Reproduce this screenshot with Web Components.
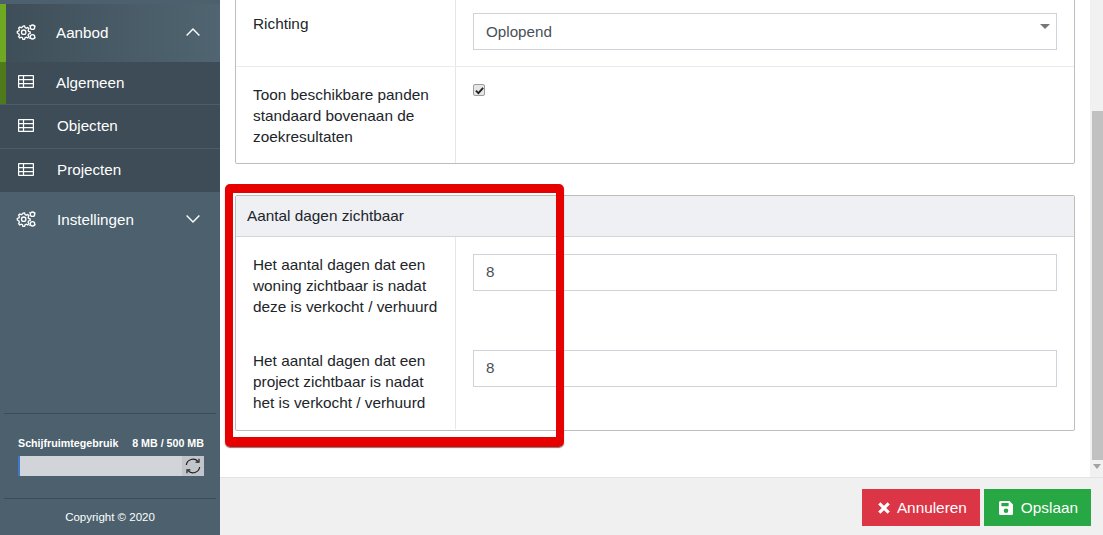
<!DOCTYPE html>
<html lang="nl">
<head>
<meta charset="utf-8">
<title>Aanbod</title>
<style>
    html, body { margin: 0; height: 100%; overflow: hidden; }
    body { font-family: "Liberation Sans", Arial, sans-serif; font-size: 15px; color: #212529; }
</style>
</head>
<body>
<app-shell>
    <side-nav slot="side">
        <nav-group icon="cogs" open active>Aanbod</nav-group>
        <nav-item current>Algemeen</nav-item>
        <nav-item>Objecten</nav-item>
        <nav-item last>Projecten</nav-item>
        <nav-group icon="cogs">Instellingen</nav-group>
    </side-nav>

    <settings-panel first>
        <form-row>
            Richting
            <form-field slot="field" select>Oplopend</form-field>
        </form-row>
        <form-row>
            Toon beschikbare panden standaard bovenaan de zoekresultaten
            <check-box slot="field"></check-box>
        </form-row>
    </settings-panel>

    <settings-panel heading="Aantal dagen zichtbaar">
        <form-row plain>
            Het aantal dagen dat een woning zichtbaar is nadat deze is verkocht / verhuurd
            <form-field slot="field">8</form-field>
        </form-row>
        <form-row plain>
            Het aantal dagen dat een project zichtbaar is nadat het is verkocht / verhuurd
            <form-field slot="field">8</form-field>
        </form-row>
    </settings-panel>

    <action-button slot="actions" kind="cancel">Annuleren</action-button>
    <action-button slot="actions" kind="save">Opslaan</action-button>
</app-shell>

<script>
const icons = {
    cogs: `<svg viewBox="0 0 20 16" width="20" height="16" fill="none" stroke="#fff" stroke-width="1.3">
        <path d="M7 3.2 8.6 3l.5 1.6 1.2.6 1.5-.7 1.1 1.2-.8 1.5.5 1.2 1.6.5v1.6l-1.6.5-.5 1.2.8 1.5-1.1 1.2-1.5-.7-1.2.5-.5 1.6H6.9l-.5-1.6-1.2-.5-1.5.7-1.1-1.2.8-1.5-.5-1.2L1.3 10V8.4l1.6-.5.5-1.2-.8-1.5 1.1-1.2 1.5.7 1.2-.6z" transform="translate(0 -1)"/>
        <circle cx="7.7" cy="8.2" r="2.2"/>
        <circle cx="16.5" cy="3.2" r="2.2"/>
        <circle cx="16.5" cy="12.8" r="2.2"/>
        <path d="M14.6 2.2 13.4 1.4M14.3 13.8l-1 .8M18.6 2.4l.8-.6M18.6 13.6l.8.6" />
    </svg>`,
    table: `<svg viewBox="0 0 16 13" width="16" height="13" fill="none" stroke="#fff" stroke-width="1.25">
        <rect x=".6" y=".6" width="14.8" height="11.8" rx=".5"/>
        <path d="M.6 4.5h14.8M.6 8.5h14.8M5.5.6v11.8"/>
    </svg>`,
    up: `<svg viewBox="0 0 14 8" width="14" height="8" fill="none" stroke="#fff" stroke-width="1.4"><path d="M.6 7.4 7 1l6.4 6.4"/></svg>`,
    down: `<svg viewBox="0 0 14 8" width="14" height="8" fill="none" stroke="#fff" stroke-width="1.4"><path d="M.6.6 7 7 13.4.6"/></svg>`,
    sync: `<svg viewBox="0 0 16 16" width="16" height="16" fill="none" stroke="#1c1f22" stroke-width="1.2">
        <path d="M1.3 7A6.8 6.8 0 0 1 13 3.4"/><path d="M14.7 9A6.8 6.8 0 0 1 3 12.6"/>
        <path d="M14 .8v3.4h-3.4" /><path d="M2 15.2v-3.4h3.4"/>
    </svg>`,
    times: `<svg viewBox="0 0 12 12" width="12" height="12" fill="#fff"><path d="M2.4 .2 6 3.8 9.6.2l2.2 2.2L8.2 6l3.6 3.6-2.2 2.2L6 8.2l-3.6 3.6L.2 9.6 3.8 6 .2 2.4z"/></svg>`,
    save: `<svg viewBox="0 0 14 14" width="14" height="14"><path fill="#fff" fill-rule="evenodd" d="M1.5 0H10.5L14 3.5V12.5A1.5 1.5 0 0 1 12.5 14H1.5A1.5 1.5 0 0 1 0 12.5V1.5A1.5 1.5 0 0 1 1.5 0zM2.4 2V5.2H9.6V2zM7 7.4a2.3 2.3 0 1 0 0 4.6 2.3 2.3 0 0 0 0-4.6z"/></svg>`
}

class AppShell extends HTMLElement {
    constructor() {
        super()
        this.attachShadow({ mode: "open" })
        this.shadowRoot.innerHTML = `
            <style>
                :host { display: flex; height: 535px; background: #fff; }
                .main { flex: 1; min-width: 0; display: flex; flex-direction: column; }
                .body { flex: 1; min-height: 0; display: flex; }
                .content { flex: 1; min-width: 0; overflow: hidden; padding: 0 15px; display: flex; flex-direction: column; gap: 31px; position: relative; }
                .bar { width: 13px; background: #f1f1f1; display: flex; flex-direction: column; padding-top: 111px; box-sizing: border-box; }
                .thumb { height: 349px; margin-left: 2px; background: #c1c1c1; }
                .arrow { margin: 4px 0 0 3px; width: 0; border: 4px solid transparent; border-top: 5px solid #a3a3a3; border-bottom: 0; }
                .foot { height: 58px; box-sizing: border-box; border-top: 1px solid #e3e3e3; background: #f0f0f0; display: flex; justify-content: flex-end; gap: 4px; padding: 11px 12px 0 0; }
                .note { position: absolute; left: 5px; top: 184px; width: 339px; height: 263px; box-sizing: border-box; border: solid #e60000; border-width: 9px 8px 10px 8px; border-radius: 5px; box-shadow: 0 1px 1px #777; pointer-events: none; }
            </style>
            <slot name="side"></slot>
            <div class="main">
                <div class="body">
                    <div class="content"><slot></slot><div class="note"></div></div>
                    <div class="bar"><div class="thumb"></div><div class="arrow"></div></div>
                </div>
                <div class="foot"><slot name="actions"></slot></div>
            </div>
        `
    }
}

class SideNav extends HTMLElement {
    constructor() {
        super()
        this.attachShadow({ mode: "open" })
        this.shadowRoot.innerHTML = `
            <style>
                :host { display: flex; flex-direction: column; width: 220px; flex: none; padding-top: 4px; box-sizing: border-box; background: #4c616d; color: #fff; }
                .rest { flex: 1; }
                .line { height: 1px; background: #3d4c56; margin: 0 4px; }
                .disk { height: 84px; box-sizing: border-box; padding: 23px 16px 0 18px; }
                .labels { display: flex; justify-content: space-between; font-size: 10.7px; font-weight: bold; line-height: 13px; }
                .track { margin-top: 6px; height: 20px; background: #d1d4d8; display: flex; justify-content: space-between; border-left: 2px solid #3f78c8; }
                .sync { width: 22px; background: #c2c5c9; display: flex; align-items: center; justify-content: center; padding-right: 1px; box-sizing: border-box; }
                .copy { flex: none; height: 36px; font-size: 11.5px; text-align: center; line-height: 36px; }
            </style>
            <slot></slot>
            <div class="rest"></div>
            <div class="line"></div>
            <div class="disk">
                <div class="labels"><span>Schijfruimtegebruik</span><span>8 MB / 500 MB</span></div>
                <div class="track"><span></span><span class="sync">${icons.sync}</span></div>
            </div>
            <div class="line"></div>
            <div class="copy">Copyright © 2020</div>
        `
    }
}

class NavGroup extends HTMLElement {
    constructor() {
        super()
        this.attachShadow({ mode: "open" })
    }

    connectedCallback() {
        const open = this.hasAttribute("open")
        this.shadowRoot.innerHTML = `
            <style>
                :host { display: flex; align-items: center; height: 58px; box-sizing: border-box; font-size: 15.2px; padding: 0 0 4px 16px; }
                :host([active]) { padding-bottom: 2px; background: linear-gradient(90deg, #3e4e58, #506571); box-shadow: inset 6px 0 0 #6fa823; }
                .label { margin-left: 21px; flex: 1; }
                :host([active]) .label { margin-left: 20px; }
                .chev { display: flex; margin-right: 20px; }
                .ico { display: flex; }
            </style>
            <span class="ico">${icons[this.getAttribute("icon")]}</span>
            <span class="label"><slot></slot></span>
            <span class="chev">${open ? icons.up : icons.down}</span>
        `
    }
}

class NavItem extends HTMLElement {
    constructor() {
        super()
        this.attachShadow({ mode: "open" })
        this.shadowRoot.innerHTML = `
            <style>
                :host { display: flex; align-items: center; height: 44px; box-sizing: border-box; background: #3d4c56; border-bottom: 1px solid #4d5d68; padding: 0 0 2px 18px; font-size: 15.2px; }
                :host([current]) { height: 43px; box-shadow: inset 6px 0 0 #4f7a1c; }
                :host([last]) { height: 43px; border-bottom: 0; }
                .ico { display: flex; margin-bottom: 1px; }
                .label { margin-left: 23px; }
                :host([current]) .label { margin-left: 22px; }
            </style>
            <span class="ico">${icons.table}</span>
            <span class="label"><slot></slot></span>
        `
    }
}

class SettingsPanel extends HTMLElement {
    constructor() {
        super()
        this.attachShadow({ mode: "open" })
    }

    connectedCallback() {
        const heading = this.getAttribute("heading")
        this.shadowRoot.innerHTML = `
            <style>
                :host { display: block; flex: none; border: 1px solid #bdbdbd; border-radius: 2px; background: #fff; }
                :host([first]) { margin-top: -5px; }
                :host([heading]) { padding-bottom: 1px; }
                .head { height: 41px; box-sizing: border-box; padding-left: 11px; background: #eef0f4; border-bottom: 1px solid #d3d5d8; line-height: 39px; font-size: 15.35px; }
            </style>
            ${heading ? `<div class="head">${heading}</div>` : ""}
            <slot></slot>
        `
    }
}

class FormRow extends HTMLElement {
    constructor() {
        super()
        this.attachShadow({ mode: "open" })
        this.shadowRoot.innerHTML = `
            <style>
                :host { display: grid; grid-template-columns: 220px 1fr; line-height: 21px; border-bottom: 1px solid #ececec; font-size: 15.35px; }
                :host(:last-child), :host([plain]) { border-bottom: 0; }
                .label { padding: 17px 16px 16px 17px; border-right: 1px solid #e4e6e9; }
                .field { padding: 17px 17px 16px 17px; }
            </style>
            <div class="label"><slot></slot></div>
            <div class="field"><slot name="field"></slot></div>
        `
    }
}

class FormField extends HTMLElement {
    constructor() {
        super()
        this.attachShadow({ mode: "open" })
        this.shadowRoot.innerHTML = `
            <style>
                :host { display: flex; align-items: center; justify-content: space-between; height: 37px; box-sizing: border-box; border: 1px solid #ced4da; background: #fff; padding: 0 12px 2px; color: #495057; font-size: 15.2px; }
                :host([select]) { padding-bottom: 0; }
                .arrow { display: none; width: 0; border: 5px solid transparent; border-top: 5px solid #777; border-bottom: 0; margin: 0 -6px 10px 0; }
                :host([select]) .arrow { display: block; }
            </style>
            <span><slot></slot></span>
            <span class="arrow"></span>
        `
    }
}

class CheckBox extends HTMLElement {
    constructor() {
        super()
        this.attachShadow({ mode: "open" })
        this.shadowRoot.innerHTML = `
            <style>
                :host { display: flex; width: 12px; height: 12px; box-sizing: border-box; border: 1px solid #9c9c9c; border-radius: 2px; background: #e6e6e6; align-items: center; justify-content: center; }
            </style>
            <svg viewBox="0 0 10 10" width="9" height="9"><path d="M1 5.2 3.8 8 9 2" fill="none" stroke="#222" stroke-width="2"/></svg>
        `
    }
}

class ActionButton extends HTMLElement {
    constructor() {
        super()
        this.attachShadow({ mode: "open" })
    }

    connectedCallback() {
        const cancel = this.getAttribute("kind") == "cancel"
        this.shadowRoot.innerHTML = `
            <style>
                :host { display: flex; align-items: center; height: 37px; box-sizing: border-box; color: #fff; font-size: 15.35px; gap: ${cancel ? 7 : 8}px; padding: 0 13px 0 ${cancel ? 16 : 15}px; background: ${cancel ? "#dc3545" : "#28a745"}; }
                .ico { display: flex; }
            </style>
            <span class="ico">${cancel ? icons.times : icons.save}</span>
            <span><slot></slot></span>
        `
    }
}

customElements.define('app-shell', AppShell)
customElements.define('side-nav', SideNav)
customElements.define('nav-group', NavGroup)
customElements.define('nav-item', NavItem)
customElements.define('settings-panel', SettingsPanel)
customElements.define('form-row', FormRow)
customElements.define('form-field', FormField)
customElements.define('check-box', CheckBox)
customElements.define('action-button', ActionButton)
</script>
</body>
</html>
